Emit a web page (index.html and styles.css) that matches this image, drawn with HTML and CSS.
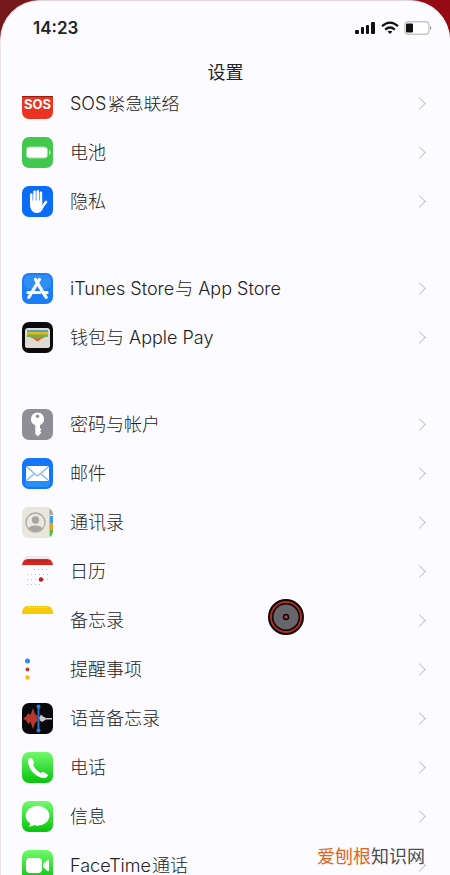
FILE: index.html
```html
<!DOCTYPE html>
<html lang="zh-CN">
<head>
    <meta charset="UTF-8">
    <meta name="viewport" content="width=device-width, initial-scale=1">
    <title>设置</title>
    <link rel="stylesheet" href="styles.css">
</head>
<body>
    <div class="phone">
        <header class="header">
            <div class="status-bar">
                <span class="time">14:23</span>
                <div class="status-icons">
                    <svg width="21" height="14" viewBox="0 0 21 14">
                        <rect x="0" y="9" width="4" height="4" rx="1"/>
                        <rect x="6" y="6" width="3" height="7" rx="1"/>
                        <rect x="11" y="4" width="3" height="9" rx="1"/>
                        <rect x="16" y="1" width="4" height="12" rx="1"/>
                    </svg>
                    <svg width="18" height="14" viewBox="0 0 18 14">
                        <g fill="none" stroke="#111" stroke-width="2.2">
                            <path d="M1 5.2Q9-1.8 17 5.2"/>
                            <path d="M4.2 8.6Q9 4.4 13.8 8.6"/>
                        </g>
                        <path d="M6.6 10.6Q9 8.8 11.4 10.6L9 13z"/>
                    </svg>
                    <svg width="28" height="14" viewBox="0 0 28 14">
                        <rect x="0.8" y="0.8" width="24" height="12.4" rx="3" fill="#fff" stroke="#c9c8c4" stroke-width="1.4"/>
                        <rect x="2" y="2.5" width="7" height="9" rx="1"/>
                        <path d="M26 4.6Q29 7 26 9.4z" fill="#aaa"/>
                    </svg>
                </div>
            </div>
            <h1>设置</h1>
        </header>

        <main class="list">
            <ul class="group">
                <li><a href="#" class="row">
                    <svg class="icon" viewBox="0 0 31 31">
                        <rect width="31" height="31" rx="7" fill="#ea3420"/>
                        <rect y="7" width="31" height="2" fill="#991b12"/>
                        <text class="sos" x="15.5" y="21" text-anchor="middle">SOS</text>
                    </svg>
                    <span class="label">SOS<span class="cjk">紧急联络</span></span>
                </a></li>
                <li><a href="#" class="row">
                    <svg class="icon" viewBox="0 0 31 31">
                        <rect width="31" height="31" rx="7" fill="#43c84e"/>
                        <rect x="4.5" y="10" width="21" height="11" rx="3" fill="#fff" stroke="#a3dfa4"/>
                        <path d="M27 13q3 2.5 0 5z" fill="#dff5df"/>
                    </svg>
                    <span class="label">电池</span>
                </a></li>
                <li><a href="#" class="row">
                    <svg class="icon" viewBox="0 0 31 31">
                        <rect width="31" height="31" rx="7" fill="#0a6cf9"/>
                        <g stroke="#fff" stroke-width="2.6" stroke-linecap="round" fill="none">
                            <path d="M9.3 18V8.500M12.500 16V5.800M15.700 16V5.200M18.900 17V6.800M20.500 20.500L24 16"/>
                        </g>
                        <path d="M8 14.500H20.200V19L22.500 17.500C21.500 22 20 27 14.800 27C10 27 8 22.500 8 18z" fill="#fff"/>
                    </svg>
                    <span class="label">隐私</span>
                </a></li>
            </ul>

            <ul class="group">
                <li><a href="#" class="row">
                    <svg class="icon" viewBox="0 0 31 31">
                        <rect width="31" height="31" rx="7" fill="#1b7df8"/>
                        <rect x="2" y="2" width="27" height="14" rx="5" fill="#2f8ff6"/>
                        <g stroke="#fff" stroke-width="3.2" stroke-linecap="round" fill="none">
                            <path d="M13.5 6.500L22.500 22M17.500 6.500L8.800 21"/>
                            <path d="M6 19.500H18M22 19.500H25M8 22.500L6.800 24.300M23 22.500L24.200 24.300"/>
                        </g>
                    </svg>
                    <span class="label">iTunes Store<span class="cjk">与</span> App Store</span>
                </a></li>
                <li><a href="#" class="row">
                    <svg class="icon" viewBox="0 0 31 31">
                        <rect width="31" height="31" rx="7" fill="#0b0a0c"/>
                        <rect x="3" y="6" width="25" height="20" rx="3" fill="#dedbd2"/>
                        <path d="M5 8H26V11H5z" fill="#52a5bd"/>
                        <path d="M5 10H26V13H5z" fill="#e4b81d"/>
                        <path d="M5 12.5H26V15H21L15.5 18L10 15H5z" fill="#75ae49"/>
                        <path d="M8 15H12L15.5 17L19 15H23L15.5 20z" fill="#e0653c"/>
                        <path d="M3 16H9Q12 16 13 18Q15.5 20.5 18 18Q19 16 22 16H28V23Q28 26 25 26H6Q3 26 3 23z" fill="#dedbd2"/>
                    </svg>
                    <span class="label">钱包与 Apple Pay</span>
                </a></li>
            </ul>

            <ul class="group">
                <li><a href="#" class="row">
                    <svg class="icon" viewBox="0 0 31 31">
                        <rect width="31" height="31" rx="7" fill="#8f8e94"/>
                        <circle cx="15.5" cy="10" r="6.6" fill="#fff"/>
                        <path d="M13.3 15H18V19L19.500 20.500L18 22L19.500 23.500L15.800 27.500L13.300 25z" fill="#fff"/>
                        <circle cx="15.5" cy="7.3" r="1.7" fill="#8f8e94"/>
                    </svg>
                    <span class="label">密码与帐户</span>
                </a></li>
                <li><a href="#" class="row">
                    <svg class="icon" viewBox="0 0 31 31">
                        <rect width="31" height="31" rx="7" fill="#1476f8"/>
                        <rect x="3" y="18" width="25" height="11" rx="4" fill="#278df7"/>
                        <rect x="4" y="8" width="23" height="15" rx="2" fill="#fff"/>
                        <path d="M5 9L14 17Q15.5 18.2 17 17L26 9M5 22L12.5 15.5M26 22L18.5 15.5" fill="none" stroke="#7eb5ed" stroke-width="1.2"/>
                    </svg>
                    <span class="label">邮件</span>
                </a></li>
                <li><a href="#" class="row">
                    <svg class="icon" viewBox="0 0 31 31">
                        <rect width="31" height="31" rx="6" fill="#e9e7dc"/>
                        <path d="M27 2Q31 3 31 8H27z" fill="#a5a5a2"/>
                        <path d="M28 9H31V16H28z" fill="#469be5"/>
                        <path d="M28 16H31V23H28z" fill="#e9a123"/>
                        <path d="M28 23H31Q31 28 28 30z" fill="#55bd45"/>
                        <path d="M27.5 2V29" stroke="#c5c4bb"/>
                        <circle cx="13.5" cy="15.5" r="9.5" fill="#ebe8df" stroke="#aaa9a8" stroke-width="1.3"/>
                        <circle cx="13.5" cy="13" r="3.7" fill="#a7a4a1"/>
                        <path d="M6.5 21.5Q8 18.5 13.5 18.5T20.5 21.5Q13.5 27.5 6.5 21.5z" fill="#a7a4a1"/>
                    </svg>
                    <span class="label">通讯录</span>
                </a></li>
                <li><a href="#" class="row">
                    <svg class="icon" viewBox="0 0 31 31">
                        <path d="M0 9Q0 0 7 0H24Q31 0 31 9z" fill="#f0e9e8"/>
                        <path d="M0 9Q1 3 6 3H25Q30 3 31 9z" fill="#d92720"/>
                        <path d="M5 5H26" stroke="#8f2b2b"/>
                        <g stroke="#bcbabf" stroke-dasharray="1 3">
                            <path d="M12 13.5H27M5 18.5H27M5 23.5H27M5 28.5H21"/>
                        </g>
                        <circle cx="19" cy="23.5" r="2.2" fill="#c01d23"/>
                    </svg>
                    <span class="label">日历</span>
                </a></li>
                <li><a href="#" class="row">
                    <svg class="icon" viewBox="0 0 31 31">
                        <path d="M0 9Q0 1 6 1H25Q31 1 31 9z" fill="#f7cb0a"/>
                        <path d="M6 2.5H26" stroke="#fff1af" stroke-dasharray="1 1"/>
                    </svg>
                    <span class="label">备忘录</span>
                </a></li>
                <li><a href="#" class="row">
                    <svg class="icon" viewBox="0 0 31 31">
                        <circle cx="5.5" cy="7" r="2.5" fill="#308cf0"/>
                        <circle cx="5.5" cy="15.5" r="2" fill="#a9453a"/>
                        <circle cx="5.5" cy="23.5" r="2.3" fill="#f3bf20"/>
                    </svg>
                    <span class="label">提醒事项</span>
                </a></li>
                <li><a href="#" class="row">
                    <svg class="icon" viewBox="0 0 31 31">
                        <rect width="31" height="31" rx="7" fill="#09080c"/>
                        <path d="M1 15.5L4 13.5L6.500 10L8.500 12L11 5L13 11L15.500 13V18L13 20L11 26L8.500 19L6.500 21L4 17.500z" fill="#b6372e"/>
                        <path d="M17 15L19 11.5L21 13.5L24 15H30V16.5H24L20 19L18 17.5z" fill="#c9c8cd"/>
                        <path d="M16.5 2V29" stroke="#2d72bc" stroke-width="2"/>
                        <circle cx="16.5" cy="3.5" r="2" fill="#367dcc"/>
                        <circle cx="16.5" cy="27.5" r="2" fill="#367dcc"/>
                    </svg>
                    <span class="label">语音备忘录</span>
                </a></li>
                <li><a href="#" class="row">
                    <svg class="icon green" viewBox="0 0 31 31">
                        <path d="M6 8.500Q6 6 8.500 6Q10.500 6 11.500 9Q12.500 11 11 13Q14 18.500 18.500 21Q20.500 19.500 22.500 20.500Q25.500 22 26 23.500Q25 26.500 21 26Q15 25 10 19.500Q6 14.500 6 8.500z" fill="#fff"/>
                    </svg>
                    <span class="label">电话</span>
                </a></li>
                <li><a href="#" class="row">
                    <svg class="icon green" viewBox="0 0 31 31">
                        <ellipse cx="15.5" cy="14.8" rx="11.8" ry="10" fill="#fff"/>
                        <path d="M8 20Q9 24 6.500 25.500Q11 25.500 13 23z" fill="#fff"/>
                    </svg>
                    <span class="label">信息</span>
                </a></li>
                <li><a href="#" class="row">
                    <svg class="icon green" viewBox="0 0 31 31">
                        <rect x="4" y="8" width="16" height="15" rx="4" fill="#fff"/>
                        <path d="M21 14L25.5 10Q27 9 27 11V20Q27 22 25.5 21L21 17z" fill="#fff"/>
                    </svg>
                    <span class="label">FaceTime<span class="cjk">通话</span></span>
                </a></li>
            </ul>
        </main>

        <svg class="touch" viewBox="0 0 38 38">
            <circle cx="19" cy="19" r="17" fill="#b02c24" stroke="#0d0909" stroke-width="2"/>
            <circle cx="19" cy="19" r="13.3" fill="#68666b" stroke="#0d0909" stroke-width="1.6"/>
            <circle cx="19" cy="19" r="2.5" fill="#b0433b" stroke="#0d0909" stroke-width="1.5"/>
        </svg>
        <div class="watermark"><span>爱刨根</span>知识网</div>
    </div>
</body>
</html>
```
FILE: styles.css
```css
* {
    box-sizing: border-box;
}

body {
    margin: 0;
    background: linear-gradient(90deg, #74191d, #960a12);
    font-family: Inter, "Noto Sans CJK SC", sans-serif;
    color: #222;
}

.phone {
    position: relative;
    height: 100vh;
    overflow: hidden;
    background: #fcfbff;
    border-left: 1px solid #ebe5e6;
    border-top: 1px solid #ddd6d9;
    border-radius: 40px 40px 0 0;
}

/* stays over the scrolled list */
.header {
    position: relative;
    z-index: 1;
    height: 95px;
    background: #fcfbff;
}

.status-bar {
    display: flex;
    justify-content: space-between;
    align-items: center;
    height: 53px;
    padding: 0 18px 0 32px;
}

.time {
    font-size: 17px;
    font-weight: 600;
}

.status-icons {
    display: flex;
    gap: 5px;
    fill: #111;
}

h1 {
    margin: 0;
    font-size: 18px;
    font-weight: 400;
    line-height: 38px;
    text-align: center;
}

.list {
    margin-top: -17px;
}

.group {
    list-style: none;
    margin: 0 0 38px;
    padding: 0;
}

.row {
    display: flex;
    align-items: center;
    height: 49px;
    padding: 0 26px 0 21px;
    color: inherit;
    text-decoration: none;
}

/* chevron */
.row::after {
    content: "";
    width: 8px;
    height: 8px;
    border-top: 1px solid #c4c2c5;
    border-right: 1px solid #c4c2c5;
    transform: rotate(45deg);
}

.icon {
    width: 31px;
    height: 31px;
    margin-right: 17px;
}

.green {
    border-radius: 7px;
    background: linear-gradient(#70fa6c, #08c30f);
}

.sos {
    font-size: 13px;
    font-weight: 700;
    fill: #fff;
}

.label {
    flex: 1;
    font-size: 18px;
    font-weight: 300;
    line-height: 24px;
}

/* small gap between latin and chinese text */
.cjk {
    margin-left: 1px;
}

.touch {
    position: absolute;
    left: 266px;
    top: 597px;
    width: 38px;
    height: 38px;
}

.watermark {
    position: absolute;
    right: 25px;
    bottom: 6px;
    z-index: 1;
    font-size: 18px;
    line-height: 24px;
    color: #4c4c50;
}

.watermark span {
    color: #e2661c;
}
```
